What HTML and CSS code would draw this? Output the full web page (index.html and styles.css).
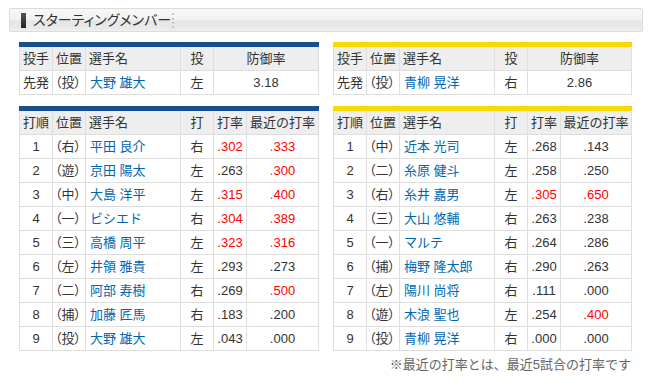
FILE: index.html
```html
<!DOCTYPE html>
<html lang="ja">
<head>
<meta charset="utf-8">
<link rel="stylesheet" href="styles.css">
</head>
<body>
<div class="title-bar">
  <span class="title-mark"></span>
  <h2 class="title">スターティングメンバー</h2>
  <span class="title-sep"></span>
</div>

<div class="teams">
  <div class="team">
    <table class="tbl pitcher blue">
      <colgroup><col style="width:33px"><col style="width:33px"><col style="width:95px"><col style="width:33px"><col></colgroup>
      <tr class="head"><th class="l">投手</th><th class="l">位置</th><th class="l">選手名</th><th>投</th><th>防御率</th></tr>
      <tr><td class="l">先発</td><td class="l pos">（投）</td><td class="l name">大野 雄大</td><td>左</td><td>3.18</td></tr>
    </table>
    <table class="tbl lineup blue">
      <colgroup><col style="width:33px"><col style="width:33px"><col style="width:95px"><col style="width:33px"><col style="width:33px"><col></colgroup>
      <tr class="head"><th class="l">打順</th><th class="l">位置</th><th class="l">選手名</th><th>打</th><th>打率</th><th>最近の打率</th></tr>
      <tr><td>1</td><td class="l pos">（右）</td><td class="l name">平田 良介</td><td>右</td><td class="red">.302</td><td class="red">.333</td></tr>
      <tr><td>2</td><td class="l pos">（遊）</td><td class="l name">京田 陽太</td><td>左</td><td>.263</td><td class="red">.300</td></tr>
      <tr><td>3</td><td class="l pos">（中）</td><td class="l name">大島 洋平</td><td>左</td><td class="red">.315</td><td class="red">.400</td></tr>
      <tr><td>4</td><td class="l pos">（一）</td><td class="l name">ビシエド</td><td>右</td><td class="red">.304</td><td class="red">.389</td></tr>
      <tr><td>5</td><td class="l pos">（三）</td><td class="l name">高橋 周平</td><td>左</td><td class="red">.323</td><td class="red">.316</td></tr>
      <tr><td>6</td><td class="l pos">（左）</td><td class="l name">井領 雅貴</td><td>左</td><td>.293</td><td>.273</td></tr>
      <tr><td>7</td><td class="l pos">（二）</td><td class="l name">阿部 寿樹</td><td>右</td><td>.269</td><td class="red">.500</td></tr>
      <tr><td>8</td><td class="l pos">（捕）</td><td class="l name">加藤 匠馬</td><td>右</td><td>.183</td><td>.200</td></tr>
      <tr><td>9</td><td class="l pos">（投）</td><td class="l name">大野 雄大</td><td>左</td><td>.043</td><td>.000</td></tr>
    </table>
  </div>
  <div class="team">
    <table class="tbl pitcher yellow">
      <colgroup><col style="width:33px"><col style="width:33px"><col style="width:95px"><col style="width:33px"><col></colgroup>
      <tr class="head"><th class="l">投手</th><th class="l">位置</th><th class="l">選手名</th><th>投</th><th>防御率</th></tr>
      <tr><td class="l">先発</td><td class="l pos">（投）</td><td class="l name">青柳 晃洋</td><td>右</td><td>2.86</td></tr>
    </table>
    <table class="tbl lineup yellow">
      <colgroup><col style="width:33px"><col style="width:33px"><col style="width:95px"><col style="width:33px"><col style="width:33px"><col></colgroup>
      <tr class="head"><th class="l">打順</th><th class="l">位置</th><th class="l">選手名</th><th>打</th><th>打率</th><th>最近の打率</th></tr>
      <tr><td>1</td><td class="l pos">（中）</td><td class="l name">近本 光司</td><td>左</td><td>.268</td><td>.143</td></tr>
      <tr><td>2</td><td class="l pos">（二）</td><td class="l name">糸原 健斗</td><td>左</td><td>.258</td><td>.250</td></tr>
      <tr><td>3</td><td class="l pos">（右）</td><td class="l name">糸井 嘉男</td><td>左</td><td class="red">.305</td><td class="red">.650</td></tr>
      <tr><td>4</td><td class="l pos">（三）</td><td class="l name">大山 悠輔</td><td>右</td><td>.263</td><td>.238</td></tr>
      <tr><td>5</td><td class="l pos">（一）</td><td class="l name">マルテ</td><td>右</td><td>.264</td><td>.286</td></tr>
      <tr><td>6</td><td class="l pos">（捕）</td><td class="l name">梅野 隆太郎</td><td>右</td><td>.290</td><td>.263</td></tr>
      <tr><td>7</td><td class="l pos">（左）</td><td class="l name">陽川 尚将</td><td>右</td><td>.111</td><td>.000</td></tr>
      <tr><td>8</td><td class="l pos">（遊）</td><td class="l name">木浪 聖也</td><td>左</td><td>.254</td><td class="red">.400</td></tr>
      <tr><td>9</td><td class="l pos">（投）</td><td class="l name">青柳 晃洋</td><td>右</td><td>.000</td><td>.000</td></tr>
    </table>
    <p class="note">※最近の打率とは、最近5試合の打率です</p>
  </div>
</div>
</body>
</html>
```

FILE: styles.css
```css
html, body {
  margin: 0;
  padding: 0;
  background: #fff;
}
body {
  font-family: "Liberation Sans", "Noto Sans CJK JP", sans-serif;
  font-size: 13px;
  color: #333;
}
.title-bar {
  margin: 8px 0 0 9px;
  width: 632px;
  height: 22px;
  border: 1px solid #dcdcdc;
  border-radius: 2px;
  background: linear-gradient(#f8f8f8 0%, #f1f1f1 50%, #e5e5e5 55%, #ebebeb 95%, #f4f4f4 100%);
  display: flex;
  align-items: center;
}
.title-mark {
  width: 5px;
  height: 15px;
  margin-left: 11px;
  background: linear-gradient(#555, #222);
}
.title {
  margin: 0 0 0 7px;
  font-size: 14px;
  font-weight: normal;
  color: #333;
  line-height: 22px;
  font-feature-settings: "palt";
}
.title-sep {
  width: 0;
  height: 15px;
  margin-left: 1px;
  border-left: 2px dotted #c8c8c8;
}
.teams {
  display: flex;
  gap: 14px;
  margin: 10px 0 0 19px;
}
.team {
  width: 300px;
}
.team + .team {
  width: 299px;
}
.tbl {
  width: 100%;
  table-layout: fixed;
  border-collapse: collapse;
  border-spacing: 0;
}
.tbl.blue { border-top: 5px solid #15508f; }
.tbl.yellow { border-top: 5px solid #fbd800; }
.tbl.lineup { margin-top: 11px; }
.tbl th, .tbl td {
  border: 1px solid #dedede;
  height: 23px;
  padding: 0;
  text-align: center;
  font-weight: normal;
  white-space: nowrap;
  overflow: hidden;
  line-height: 22px;
}
.tbl tr.head th {
  background: #eeeeee;
}
.tbl .l {
  text-align: left;
  padding-left: 3px;
}
.tbl .pos {
  font-feature-settings: "palt";
  padding-left: 2px;
}
.tbl .name {
  color: #0066b0;
  padding-left: 4px;
}
.tbl .red {
  color: #ff0000;
}
.note {
  margin: 5px 1px 0 0;
  text-align: right;
  color: #666;
  font-size: 13px;
  line-height: 18px;
}
```
